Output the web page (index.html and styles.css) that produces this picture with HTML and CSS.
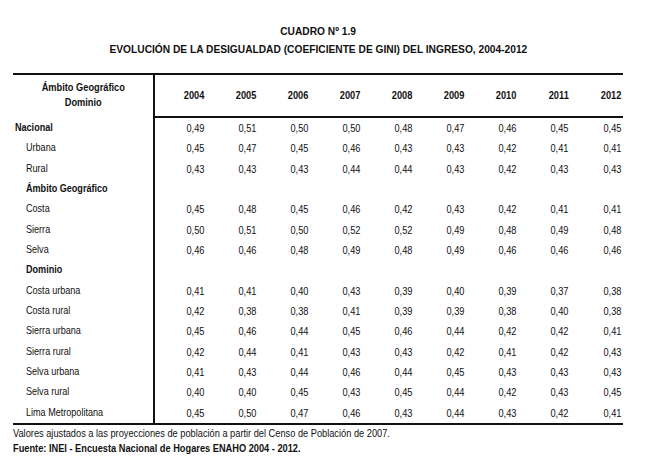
FILE: index.html
```html
<!DOCTYPE html>
<html lang="es">
<head>
<meta charset="utf-8">
<title>Cuadro 1.9</title>
<link rel="stylesheet" href="styles.css">
</head>
<body>
<div class="page">
  <div class="titles">
    <div class="title"><span class="t">CUADRO Nº 1.9</span></div>
    <div class="title"><span class="t">EVOLUCIÓN DE LA DESIGUALDAD (COEFICIENTE DE GINI) DEL INGRESO, 2004-2012</span></div>
  </div>
  <table class="gini">
    <colgroup>
      <col class="c-label">
      <col span="9" class="c-year">
    </colgroup>
    <thead>
      <tr>
        <th class="head-label"><span class="t">Ámbito Geográfico<br>Dominio</span></th>
        <th><span class="t">2004</span></th><th><span class="t">2005</span></th><th><span class="t">2006</span></th><th><span class="t">2007</span></th><th><span class="t">2008</span></th><th><span class="t">2009</span></th><th><span class="t">2010</span></th><th><span class="t">2011</span></th><th><span class="t">2012</span></th>
      </tr>
    </thead>
    <tbody>
      <tr><td class="lbl top"><span class="t">Nacional</span></td><td><span class="t">0,49</span></td><td><span class="t">0,51</span></td><td><span class="t">0,50</span></td><td><span class="t">0,50</span></td><td><span class="t">0,48</span></td><td><span class="t">0,47</span></td><td><span class="t">0,46</span></td><td><span class="t">0,45</span></td><td><span class="t">0,45</span></td></tr>
      <tr><td class="lbl"><span class="t">Urbana</span></td><td><span class="t">0,45</span></td><td><span class="t">0,47</span></td><td><span class="t">0,45</span></td><td><span class="t">0,46</span></td><td><span class="t">0,43</span></td><td><span class="t">0,43</span></td><td><span class="t">0,42</span></td><td><span class="t">0,41</span></td><td><span class="t">0,41</span></td></tr>
      <tr><td class="lbl"><span class="t">Rural</span></td><td><span class="t">0,43</span></td><td><span class="t">0,43</span></td><td><span class="t">0,43</span></td><td><span class="t">0,44</span></td><td><span class="t">0,44</span></td><td><span class="t">0,43</span></td><td><span class="t">0,42</span></td><td><span class="t">0,43</span></td><td><span class="t">0,43</span></td></tr>
      <tr><td class="lbl sec"><span class="t">Ámbito Geográfico</span></td><td></td><td></td><td></td><td></td><td></td><td></td><td></td><td></td><td></td></tr>
      <tr><td class="lbl"><span class="t">Costa</span></td><td><span class="t">0,45</span></td><td><span class="t">0,48</span></td><td><span class="t">0,45</span></td><td><span class="t">0,46</span></td><td><span class="t">0,42</span></td><td><span class="t">0,43</span></td><td><span class="t">0,42</span></td><td><span class="t">0,41</span></td><td><span class="t">0,41</span></td></tr>
      <tr><td class="lbl"><span class="t">Sierra</span></td><td><span class="t">0,50</span></td><td><span class="t">0,51</span></td><td><span class="t">0,50</span></td><td><span class="t">0,52</span></td><td><span class="t">0,52</span></td><td><span class="t">0,49</span></td><td><span class="t">0,48</span></td><td><span class="t">0,49</span></td><td><span class="t">0,48</span></td></tr>
      <tr><td class="lbl"><span class="t">Selva</span></td><td><span class="t">0,46</span></td><td><span class="t">0,46</span></td><td><span class="t">0,48</span></td><td><span class="t">0,49</span></td><td><span class="t">0,48</span></td><td><span class="t">0,49</span></td><td><span class="t">0,46</span></td><td><span class="t">0,46</span></td><td><span class="t">0,46</span></td></tr>
      <tr><td class="lbl sec"><span class="t">Dominio</span></td><td></td><td></td><td></td><td></td><td></td><td></td><td></td><td></td><td></td></tr>
      <tr><td class="lbl"><span class="t">Costa urbana</span></td><td><span class="t">0,41</span></td><td><span class="t">0,41</span></td><td><span class="t">0,40</span></td><td><span class="t">0,43</span></td><td><span class="t">0,39</span></td><td><span class="t">0,40</span></td><td><span class="t">0,39</span></td><td><span class="t">0,37</span></td><td><span class="t">0,38</span></td></tr>
      <tr><td class="lbl"><span class="t">Costa rural</span></td><td><span class="t">0,42</span></td><td><span class="t">0,38</span></td><td><span class="t">0,38</span></td><td><span class="t">0,41</span></td><td><span class="t">0,39</span></td><td><span class="t">0,39</span></td><td><span class="t">0,38</span></td><td><span class="t">0,40</span></td><td><span class="t">0,38</span></td></tr>
      <tr><td class="lbl"><span class="t">Sierra urbana</span></td><td><span class="t">0,45</span></td><td><span class="t">0,46</span></td><td><span class="t">0,44</span></td><td><span class="t">0,45</span></td><td><span class="t">0,46</span></td><td><span class="t">0,44</span></td><td><span class="t">0,42</span></td><td><span class="t">0,42</span></td><td><span class="t">0,41</span></td></tr>
      <tr><td class="lbl"><span class="t">Sierra rural</span></td><td><span class="t">0,42</span></td><td><span class="t">0,44</span></td><td><span class="t">0,41</span></td><td><span class="t">0,43</span></td><td><span class="t">0,43</span></td><td><span class="t">0,42</span></td><td><span class="t">0,41</span></td><td><span class="t">0,42</span></td><td><span class="t">0,43</span></td></tr>
      <tr><td class="lbl"><span class="t">Selva urbana</span></td><td><span class="t">0,41</span></td><td><span class="t">0,43</span></td><td><span class="t">0,44</span></td><td><span class="t">0,46</span></td><td><span class="t">0,44</span></td><td><span class="t">0,45</span></td><td><span class="t">0,43</span></td><td><span class="t">0,43</span></td><td><span class="t">0,43</span></td></tr>
      <tr><td class="lbl"><span class="t">Selva rural</span></td><td><span class="t">0,40</span></td><td><span class="t">0,40</span></td><td><span class="t">0,45</span></td><td><span class="t">0,43</span></td><td><span class="t">0,45</span></td><td><span class="t">0,44</span></td><td><span class="t">0,42</span></td><td><span class="t">0,43</span></td><td><span class="t">0,45</span></td></tr>
      <tr><td class="lbl"><span class="t">Lima Metropolitana</span></td><td><span class="t">0,45</span></td><td><span class="t">0,50</span></td><td><span class="t">0,47</span></td><td><span class="t">0,46</span></td><td><span class="t">0,43</span></td><td><span class="t">0,44</span></td><td><span class="t">0,43</span></td><td><span class="t">0,42</span></td><td><span class="t">0,41</span></td></tr>
    </tbody>
  </table>
  <p class="note"><span class="t">Valores ajustados a las proyecciones de población a partir del Censo de Población de 2007.</span></p>
  <p class="note source"><span class="t">Fuente: INEI - Encuesta Nacional de Hogares ENAHO 2004 - 2012.</span></p>
</div>
</body>
</html>
```
FILE: styles.css
```css
html, body {
  margin: 0;
  padding: 0;
  background: #ffffff;
}

body {
  font-family: "Liberation Sans", Arial, sans-serif;
  color: #111111;
}

.page {
  width: 610px;
  margin-left: 13px;
  padding-top: 22px;
}

/* The source uses a narrow face (Arial Narrow); emulate it by condensing each text run */
.t {
  display: inline-block;
  white-space: nowrap;
  transform: scaleX(0.88);
  transform-origin: 0 50%;
}

.titles {
  text-align: center;
  font-weight: bold;
  font-size: 11.6px;
  line-height: 18px;
  height: 51px;
}

.titles .t,
.head-label .t {
  transform-origin: 50% 50%;
}

.gini {
  border-collapse: collapse;
  table-layout: fixed;
  width: 610px;
  font-size: 10.5px;
}

.c-label { width: 141px; }
.c-year { width: 52.1px; }

.gini thead th {
  height: 40px;
  border-top: 2px solid #111;
  border-bottom: 2px solid #111;
  font-weight: bold;
  text-align: right;
  padding: 0 2px 0 0;
  vertical-align: middle;
  line-height: 15px;
}

.gini th .t,
.gini td .t {
  transform-origin: 100% 50%;
}

.gini thead th.head-label {
  text-align: center;
  border-bottom: none;
  border-right: 2px solid #111;
  padding: 0 0 2px 0;
}

.gini thead th.head-label .t {
  transform-origin: 50% 50%;
}

.gini td {
  height: 20.33px;
  padding: 0 2px 0 0;
  text-align: right;
  vertical-align: middle;
  line-height: 12px;
}

.gini td.lbl {
  text-align: left;
  padding-left: 13px;
  border-right: 2px solid #111;
  font-size: 10.3px;
}

.gini td.lbl .t {
  transform-origin: 0 50%;
}

.gini td.top {
  padding-left: 2px;
  font-weight: bold;
}

.gini td.sec {
  font-weight: bold;
}

.gini tbody tr:last-child td {
  border-bottom: 2px solid #111;
}

.note {
  margin: 2px 0 0 0;
  font-size: 10.5px;
  line-height: 13px;
}

.note.source {
  margin-top: 2px;
  font-weight: bold;
}
```
